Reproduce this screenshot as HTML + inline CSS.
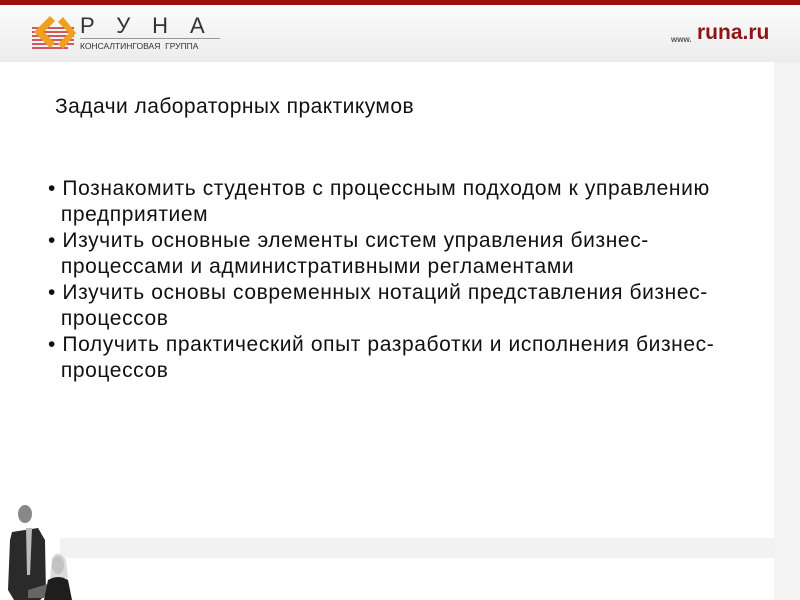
<!DOCTYPE html>
<html><head><meta charset="utf-8"><style>
body{margin:0;width:800px;height:600px;position:relative;overflow:hidden;background:#fff;font-family:"Liberation Sans",sans-serif;}
.top{position:absolute;left:0;top:0;width:800px;height:5px;background:#9a0f0f;}
.hdr{position:absolute;left:0;top:5px;width:800px;height:57px;background:linear-gradient(#fbfbfb,#ececec);}
.rc{position:absolute;left:774px;top:62px;width:26px;height:538px;background:#f3f3f3;}
.band{position:absolute;left:60px;top:538px;width:714px;height:20px;background:#f2f2f2;}
.t{position:absolute;color:#111;white-space:nowrap;}
.l{font-size:21px;left:48px;letter-spacing:0.6px;}
</style></head><body>
<div class="top"></div><div class="hdr"></div><div class="rc"></div><div class="band"></div>
<svg style="position:absolute;left:28px;top:14px" width="50" height="40" viewBox="0 0 50 40">
<g stroke="#c2272d" stroke-width="1.5"><line x1="4" y1="14" x2="46" y2="14"/><line x1="4" y1="18" x2="46" y2="18"/><line x1="4" y1="22" x2="46" y2="22"/><line x1="4" y1="26" x2="46" y2="26"/><line x1="4" y1="30" x2="46" y2="30"/><line x1="4" y1="34" x2="40" y2="34"/></g>
<path d="M22 2 L6 18 L22 34 L27 29 L16 18 L27 7Z" fill="#f0a020"/>
<path d="M30 8 L41 19 L30 30 L35 35 L48 19 L35 3Z" fill="#f0a020"/>
</svg>
<div class="t" style="left:80px;top:13px;font-size:22px;letter-spacing:22px;color:#333;">РУНА</div>
<div style="position:absolute;left:80px;top:38px;width:140px;height:1px;background:#999"></div>
<div class="t" style="left:80px;top:41px;font-size:8.5px;color:#333;">КОНСАЛТИНГОВАЯ &nbsp;ГРУППА</div>
<div class="t" style="left:671px;top:35px;font-size:8px;color:#555;font-weight:bold">www.</div>
<div class="t" style="left:697px;top:21px;font-size:21px;color:#8f1515;font-weight:bold">runa.ru</div>
<div class="t" style="left:55px;top:95px;font-size:21px;letter-spacing:0.45px;">Задачи лабораторных практикумов</div>
<div class="t l" style="top:177px">• Познакомить студентов с процессным подходом к управлению</div>
<div class="t l" style="top:203px">&nbsp; предприятием</div>
<div class="t l" style="top:229px">• Изучить основные элементы систем управления бизнес-</div>
<div class="t l" style="top:255px">&nbsp; процессами и административными регламентами</div>
<div class="t l" style="top:281px">• Изучить основы современных нотаций представления бизнес-</div>
<div class="t l" style="top:307px">&nbsp; процессов</div>
<div class="t l" style="top:333px">• Получить практический опыт разработки и исполнения бизнес-</div>
<div class="t l" style="top:359px">&nbsp; процессов</div>
<svg style="position:absolute;left:0;top:500px" width="120" height="100">
<ellipse cx="25" cy="14" rx="7" ry="9" fill="#888"/>
<path d="M12 32 L38 28 L45 40 L46 95 L40 100 L14 100 L8 90 L10 40Z" fill="#2a2a2a"/>
<path d="M26 28 L32 28 L30 75 L27 75Z" fill="#bbb"/>
<path d="M28 90 L48 84 L44 98 L28 98Z" fill="#666"/>
<ellipse cx="58" cy="65" rx="6" ry="9" fill="#aaa"/>
<path d="M52 58 Q58 48 66 60 L68 78 L50 78Z" fill="#ccc" opacity="0.7"/>
<path d="M48 80 Q58 74 68 80 L72 100 L44 100Z" fill="#1e1e1e"/>
</svg>
</body></html>
